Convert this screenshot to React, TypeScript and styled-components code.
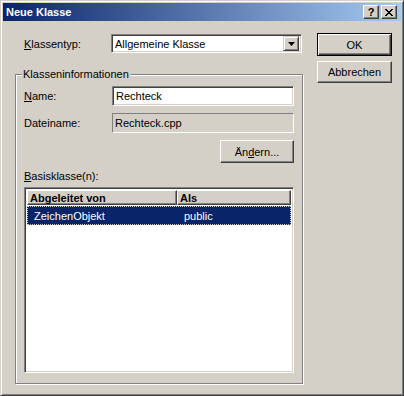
import React from "react";
import styled, { createGlobalStyle } from "styled-components";

const GlobalStyle = createGlobalStyle`
  html, body {
    margin: 0;
    padding: 0;
    background: #d4d0c8;
  }
  body {
    font-family: "Liberation Sans", Arial, sans-serif;
    font-size: 11px;
    color: #000;
  }
`;

const Window = styled.div`
  width: 404px;
  height: 396px;
  box-sizing: border-box;
  background: #d4d0c8;
  border: 1px solid;
  border-color: #d4d0c8 #404040 #404040 #d4d0c8;
  box-shadow: inset 1px 1px #fff, inset -1px -1px #808080;
  padding: 2px;
  display: flex;
  flex-direction: column;
`;

const TitleBar = styled.div`
  height: 18px;
  flex: none;
  display: flex;
  align-items: center;
  padding: 0 4px 0 2px;
  background: linear-gradient(to right, #0a246a, #a6caf0);
`;

const TitleText = styled.span`
  flex: 1;
  color: #fff;
  font-weight: bold;
  font-size: 11px;
  padding-left: 1px;
`;

const TitleButtons = styled.div`
  display: flex;
  gap: 2px;
`;

const CaptionButton = styled.div`
  width: 16px;
  height: 14px;
  box-sizing: border-box;
  background: #d4d0c8;
  border: 1px solid;
  border-color: #fff #404040 #404040 #fff;
  box-shadow: inset -1px -1px #808080;
  display: flex;
  align-items: center;
  justify-content: center;
  font-weight: bold;
  font-size: 11px;
  line-height: 1;
`;

const Body = styled.div`
  flex: 1;
  display: flex;
  padding: 0 0 0 12px;
`;

const LeftColumn = styled.div`
  width: 289px;
  display: flex;
  flex-direction: column;
  padding-top: 13px;
`;

const RightColumn = styled.div`
  width: 75px;
  margin-left: 13px;
  padding-top: 12px;
  display: flex;
  flex-direction: column;
  gap: 5px;
`;

const Row = styled.div<{ $indent?: number; $height?: number }>`
  display: flex;
  align-items: center;
  height: ${(p) => p.$height ?? 20}px;
  padding-left: ${(p) => p.$indent ?? 0}px;
`;

const Label = styled.span<{ $width: number }>`
  width: ${(p) => p.$width}px;
  flex: none;
  white-space: nowrap;
`;

const Key = styled.span`
  text-decoration: underline;
`;

const Sunken = styled.div<{ $readonly?: boolean }>`
  box-sizing: border-box;
  height: 100%;
  border: 1px solid;
  border-color: #808080 #fff #fff #808080;
  box-shadow: ${(p) =>
    p.$readonly ? "none" : "inset 1px 1px #404040, inset -1px -1px #d4d0c8"};
  background: ${(p) => (p.$readonly ? "#d4d0c8" : "#fff")};
  display: flex;
  align-items: center;
  padding-left: ${(p) => (p.$readonly ? 2 : 3)}px;
  white-space: nowrap;
`;

const Combo = styled(Sunken)`
  width: 191px;
  height: 19px;
  padding-right: 2px;
  justify-content: space-between;
`;

const Field = styled(Sunken)`
  flex: 1;
`;

const DropButton = styled.div`
  width: 16px;
  height: 15px;
  box-sizing: border-box;
  background: #d4d0c8;
  border: 1px solid;
  border-color: #d4d0c8 #404040 #404040 #d4d0c8;
  box-shadow: inset 1px 1px #fff, inset -1px -1px #808080;
  display: flex;
  align-items: center;
  justify-content: center;
`;

const PushButton = styled.button<{ $default?: boolean; $width?: number; $height?: number }>`
  width: ${(p) => p.$width ?? 75}px;
  height: ${(p) => p.$height ?? (p.$default ? 23 : 22)}px;
  box-sizing: border-box;
  padding: 0;
  font-family: inherit;
  font-size: 11px;
  color: #000;
  background: #d4d0c8;
  border: 1px solid;
  border-color: ${(p) =>
    p.$default ? "#000" : "#fff #404040 #404040 #fff"};
  box-shadow: ${(p) =>
    p.$default
      ? "inset 1px 1px #fff, inset -1px -1px #404040, inset -2px -2px #808080"
      : "inset -1px -1px #808080"};
`;

const Group = styled.div`
  position: relative;
  margin-top: 21px;
  width: 288px;
  height: 310px;
  box-sizing: border-box;
  border: 1px solid #808080;
  box-shadow: 1px 1px 0 #fff, inset 1px 1px 0 #fff;
  padding: 11px 8px 10px 8px;
  display: flex;
  flex-direction: column;
  gap: 7px;
`;

const Legend = styled.span`
  position: absolute;
  top: -7px;
  left: 6px;
  padding: 0 2px 0 1px;
  background: #d4d0c8;
  line-height: 13px;
`;

const ButtonRow = styled.div`
  display: flex;
  justify-content: flex-end;
`;

const ListLabel = styled.div`
  line-height: 13px;
  margin-bottom: -3px;
`;

const ListView = styled.div`
  flex: 1;
  box-sizing: border-box;
  border: 1px solid;
  border-color: #808080 #fff #fff #808080;
  box-shadow: inset 1px 1px #404040, inset -1px -1px #d4d0c8;
  background: #fff;
  padding: 2px;
`;

const Header = styled.div`
  display: flex;
  height: 15px;
`;

const HeaderCell = styled.div<{ $width?: number }>`
  ${(p) => (p.$width ? `width: ${p.$width}px;` : "flex: 1;")}
  box-sizing: border-box;
  background: #d4d0c8;
  border: 1px solid;
  border-color: #fff #404040 #404040 #fff;
  box-shadow: inset -1px -1px #808080;
  font-weight: bold;
  padding-left: 2px;
  display: flex;
  align-items: center;
`;

const ListRow = styled.div<{ $selected?: boolean }>`
  display: flex;
  height: 19px;
  margin-top: 1px;
  box-sizing: border-box;
  background: ${(p) => (p.$selected ? "#0a246a" : "transparent")};
  color: ${(p) => (p.$selected ? "#fff" : "#000")};
  border: 1px dotted ${(p) => (p.$selected ? "#c8c8c8" : "transparent")};
`;

const Cell = styled.div<{ $width?: number; $pad: number }>`
  ${(p) => (p.$width ? `width: ${p.$width}px;` : "flex: 1;")}
  padding-left: ${(p) => p.$pad}px;
  display: flex;
  align-items: center;
  box-sizing: border-box;
`;

const Arrow = () => (
  <svg width="7" height="4" viewBox="0 0 7 4">
    <path d="M0 0H7L3.5 4Z" fill="#000" />
  </svg>
);

const CloseGlyph = () => (
  <svg width="8" height="7" viewBox="0 0 8 7">
    <path d="M0 0L7 7M1 0L8 7M7 0L0 7M8 0L1 7" stroke="#000" strokeWidth="1" />
  </svg>
);

export default function App() {
  return (
    <>
      <GlobalStyle />
      <Window>
        <TitleBar>
          <TitleText>Neue Klasse</TitleText>
          <TitleButtons>
            <CaptionButton>?</CaptionButton>
            <CaptionButton>
              <CloseGlyph />
            </CaptionButton>
          </TitleButtons>
        </TitleBar>
        <Body>
          <LeftColumn>
            <Row $indent={9} $height={19}>
              <Label $width={87}>
                <Key>K</Key>lassentyp:
              </Label>
              <Combo>
                <span>Allgemeine Klasse</span>
                <DropButton>
                  <Arrow />
                </DropButton>
              </Combo>
            </Row>
            <Group>
              <Legend>Klasseninformationen</Legend>
              <Row>
                <Label $width={88}>
                  <Key>N</Key>ame:
                </Label>
                <Field>Rechteck</Field>
              </Row>
              <Row>
                <Label $width={88}>Dateiname:</Label>
                <Field $readonly>Rechteck.cpp</Field>
              </Row>
              <ButtonRow>
                <PushButton $width={74} $height={23}>
                  Än<Key>d</Key>ern...
                </PushButton>
              </ButtonRow>
              <ListLabel>
                <Key>B</Key>asisklasse(n):
              </ListLabel>
              <ListView>
                <Header>
                  <HeaderCell $width={150}>Abgeleitet von</HeaderCell>
                  <HeaderCell>Als</HeaderCell>
                </Header>
                <ListRow $selected>
                  <Cell $width={150} $pad={6}>ZeichenObjekt</Cell>
                  <Cell $pad={6}>public</Cell>
                </ListRow>
              </ListView>
            </Group>
          </LeftColumn>
          <RightColumn>
            <PushButton $default>OK</PushButton>
            <PushButton>Abbrechen</PushButton>
          </RightColumn>
        </Body>
      </Window>
    </>
  );
}
